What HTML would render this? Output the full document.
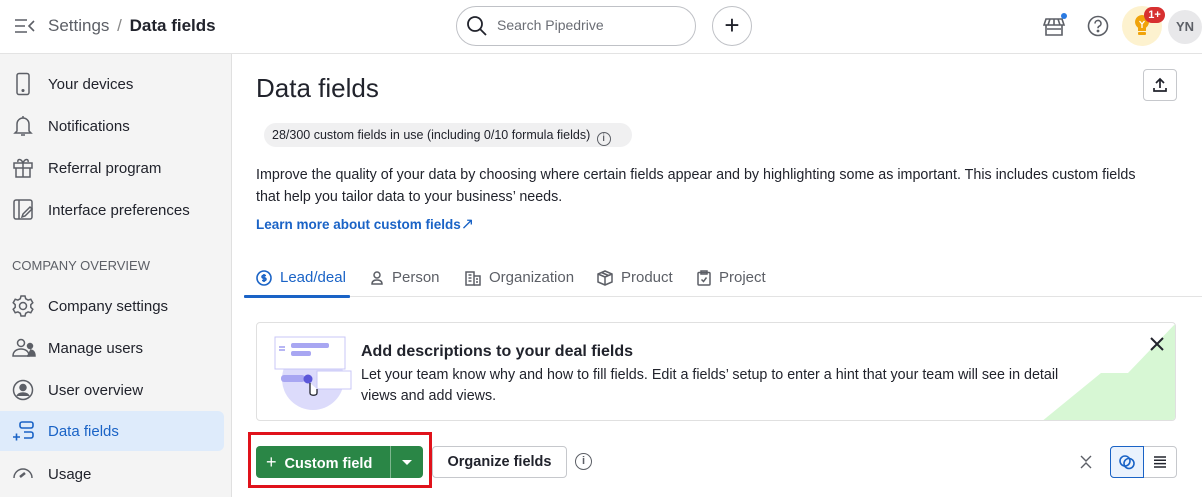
<!DOCTYPE html>
<html><head><meta charset="utf-8"><style>
*{box-sizing:border-box;margin:0;padding:0}
body{width:1202px;height:497px;overflow:hidden;font-family:"Liberation Sans",sans-serif;color:#21232c;background:#fff;position:relative}
.abs{position:absolute}
.hdr{left:0;top:0;width:1202px;height:54px;border-bottom:1px solid #e3e3e3;background:#fff}
.side{left:0;top:54px;width:232px;height:443px;background:#f4f4f4;border-right:1px solid #e0e0e0}
.item{position:absolute;left:0;width:224px;height:40px;display:flex;align-items:center;font-size:15px;color:#21232c}
.item svg{position:absolute;left:12px}
.item span{position:absolute;left:48px}
.sel{background:#deebfb;color:#1a63c6;border-radius:0 6px 6px 0}
.tab{position:absolute;top:269px;font-size:15px;color:#5c5f66;display:flex;align-items:center;gap:8px}
</style></head><body>
<div class="abs hdr">
<svg class="abs" style="left:14px;top:18px" width="22" height="16" viewBox="0 0 22 16" fill="none" stroke="#5c5f66" stroke-width="1.6"><path d="M1 2h12M1 8h10M1 14h12M20 3l-5 5 5 5"/></svg>
<div class="abs" style="left:48px;top:16px;font-size:17px;color:#5c5f66">Settings <span style="color:#888;margin:0 3px">/</span> <b style="color:#21232c">Data fields</b></div>
<div class="abs" style="left:456px;top:6px;width:240px;height:40px;border:1px solid #bfc1c6;border-radius:20px"></div>
<svg class="abs" style="left:466px;top:15px" width="22" height="22" viewBox="0 0 22 22" fill="none" stroke="#21232c" stroke-width="1.8"><circle cx="9" cy="9" r="7"/><path d="M14 14l6 6"/></svg>
<div class="abs" style="left:497px;top:17px;font-size:14px;color:#6a6d74">Search Pipedrive</div>
<div class="abs" style="left:712px;top:6px;width:40px;height:40px;border:1px solid #bfc1c6;border-radius:20px;text-align:center;line-height:36px;font-size:26px;color:#21232c">+</div>
<svg class="abs" style="left:1043px;top:15px" width="24" height="22" viewBox="0 0 24 22" fill="none" stroke="#5c5f66" stroke-width="1.6"><path d="M3 4h16l2 6H1zM3 10v10h16V10M7 4L5 10M11 4v6M15 4l2 6M4 14h14"/></svg>
<div class="abs" style="left:1061px;top:13px;width:6px;height:6px;border-radius:3px;background:#2a7ae2"></div>
<svg class="abs" style="left:1087px;top:15px" width="22" height="22" viewBox="0 0 22 22" fill="none" stroke="#5c5f66" stroke-width="1.6"><circle cx="11" cy="11" r="9.5"/><path d="M8 8.5a3 3 0 1 1 4 2.8c-.8.4-1 1-1 2"/><circle cx="11" cy="16" r=".6" fill="#5c5f66"/></svg>
<div class="abs" style="left:1122px;top:6px;width:40px;height:40px;border-radius:20px;background:#fdf2cf"></div>
<svg class="abs" style="left:1133px;top:14px" width="18" height="24" viewBox="0 0 18 24"><path d="M9 1a7 7 0 0 0-4 12.7V17h8v-3.3A7 7 0 0 0 9 1z" fill="#f0a30a"/><rect x="5" y="18" width="8" height="3" rx="1" fill="#f0a30a"/><path d="M6.5 7l2.5 3 2.5-3M9 10v4" stroke="#fff" stroke-width="1.3" fill="none"/></svg>
<div class="abs" style="left:1144px;top:7px;width:21px;height:16px;border-radius:8px;background:#d73030;color:#fff;font-size:11px;font-weight:bold;text-align:center;line-height:16px">1+</div>
<div class="abs" style="left:1168px;top:10px;width:34px;height:34px;border-radius:17px;background:#e8e8ea;color:#5c5f66;font-size:13px;font-weight:bold;text-align:center;line-height:34px">YN</div>
</div>
<div class="abs side">
<div class="item" style="top:10px"><svg width="22" height="24" viewBox="0 0 22 24" fill="none" stroke="#5c5f66" stroke-width="1.5"><rect x="5" y="1.5" width="12" height="21" rx="2"/><circle cx="11" cy="18.5" r=".8" fill="#5c5f66"/></svg><span>Your devices</span></div>
<div class="item" style="top:52px"><svg width="22" height="24" viewBox="0 0 22 24" fill="none" stroke="#5c5f66" stroke-width="1.5"><path d="M5 17V10a6 6 0 0 1 12 0v7l2 2H3zM9 21h4M11 2v2"/></svg><span>Notifications</span></div>
<div class="item" style="top:94px"><svg width="22" height="24" viewBox="0 0 22 24" fill="none" stroke="#5c5f66" stroke-width="1.5"><rect x="2" y="7" width="18" height="5"/><path d="M4 12v9h14v-9M11 7v14M11 7c-2-5-6-4-5-1M11 7c2-5 6-4 5-1"/></svg><span>Referral program</span></div>
<div class="item" style="top:136px"><svg width="22" height="24" viewBox="0 0 22 24" fill="none" stroke="#5c5f66" stroke-width="1.5"><rect x="2" y="2" width="18" height="19" rx="2"/><path d="M7 2v19M10 19l1-3 7-7 2 2-7 7z"/></svg><span>Interface preferences</span></div>
<div class="abs" style="left:12px;top:204px;font-size:13px;color:#5c5f66">COMPANY OVERVIEW</div>
<div class="item" style="top:232px"><svg width="22" height="24" viewBox="0 0 22 24" fill="none" stroke="#5c5f66" stroke-width="1.5"><circle cx="11" cy="12" r="3.5"/><path d="M9 2h4l.7 2.7 2.4 1.4 2.7-.8 2 3.4-2 2v2.6l2 2-2 3.4-2.7-.8-2.4 1.4L13 22H9l-.7-2.7-2.4-1.4-2.7.8-2-3.4 2-2v-2.6l-2-2 2-3.4 2.7.8 2.4-1.4z"/></svg><span>Company settings</span></div>
<div class="item" style="top:274px"><svg width="24" height="24" viewBox="0 0 24 24" fill="none" stroke="#5c5f66" stroke-width="1.5"><circle cx="9" cy="7" r="3.5"/><path d="M1 20c0-5 4-7 8-7s8 2 8 7z"/><circle cx="18" cy="10" r="2.5" fill="#5c5f66"/><path d="M15 20h8c0-4-2-6-5-6" fill="#5c5f66"/></svg><span>Manage users</span></div>
<div class="item" style="top:316px"><svg width="22" height="24" viewBox="0 0 22 24" fill="none" stroke="#5c5f66" stroke-width="1.5"><circle cx="11" cy="12" r="9.5"/><circle cx="11" cy="9.5" r="3" fill="#5c5f66"/><path d="M5 18c2-4 10-4 12 0" fill="#5c5f66"/></svg><span>User overview</span></div>
<div class="item sel" style="top:357px"><svg width="24" height="24" viewBox="0 0 24 24" fill="none" stroke="#1a63c6" stroke-width="1.6"><rect x="8" y="3" width="13" height="6" rx="2"/><path d="M12 13h7a2 2 0 0 1 2 2v2a2 2 0 0 1-2 2h-7M1 18h7M4.5 14.5v7"/></svg><span style="font-weight:500">Data fields</span></div>
<div class="item" style="top:400px"><svg width="22" height="24" viewBox="0 0 22 24" fill="none" stroke="#5c5f66" stroke-width="1.5"><path d="M2 16a9 9 0 0 1 18 0"/><path d="M8 15l5-4" stroke-width="2.5"/></svg><span>Usage</span></div>
</div>
<div class="abs" style="left:256px;top:73px;font-size:26px">Data fields</div>
<div class="abs" style="left:1143px;top:69px;width:34px;height:32px;border:1px solid #c6c8cc;border-radius:4px"></div>
<svg class="abs" style="left:1151px;top:76px" width="18" height="18" viewBox="0 0 18 18" fill="none" stroke="#21232c" stroke-width="1.7"><path d="M9 12V3M5 7l4-4 4 4M3 12v3h12v-3"/></svg>
<div class="abs" style="left:264px;top:123px;width:368px;height:24px;border-radius:12px;background:#f0f0f1;font-size:12.5px;line-height:24px;padding-left:8px;color:#21232c">28/300 custom fields in use (including 0/10 formula fields) <span style="display:inline-block;width:14px;height:14px;border:1.3px solid #5c5f66;border-radius:7px;font-size:10px;line-height:12px;text-align:center;vertical-align:-2px;margin-left:3px">i</span></div>
<div class="abs" style="left:256px;top:164px;width:895px;font-size:14.3px;line-height:22px">Improve the quality of your data by choosing where certain fields appear and by highlighting some as important. This includes custom fields that help you tailor data to your business’ needs.</div>
<div class="abs" style="left:256px;top:214px;font-size:13.5px;color:#1a63c6;font-weight:bold">Learn more about custom fields<span style="font-weight:normal;font-size:16px">↗</span></div>
<div class="tab" style="left:256px;color:#1a63c6"><svg width="16" height="16" viewBox="0 0 16 16" fill="none" stroke="#1a63c6" stroke-width="1.6"><circle cx="8" cy="8" r="7"/><path d="M10 5.5H7a1.3 1.3 0 0 0 0 2.5h2a1.3 1.3 0 0 1 0 2.5H6M8 4v8"/></svg>Lead/deal</div>
<div class="tab" style="left:370px"><svg width="14" height="16" viewBox="0 0 14 16" fill="none" stroke="#5c5f66" stroke-width="1.5"><circle cx="7" cy="5" r="3"/><path d="M2 14c0-3 2-4 5-4s5 1 5 4z"/></svg>Person</div>
<div class="tab" style="left:465px"><svg width="16" height="16" viewBox="0 0 16 16" fill="none" stroke="#5c5f66" stroke-width="1.5"><rect x="1" y="2" width="8" height="13"/><path d="M9 6h6v9H9M3.5 5h3M3.5 8h3M3.5 11h3M11 9h2M11 12h2"/></svg>Organization</div>
<div class="tab" style="left:597px"><svg width="16" height="16" viewBox="0 0 16 16" fill="none" stroke="#5c5f66" stroke-width="1.5"><path d="M8 1l7 3v8l-7 3-7-3V4zM1 4l7 3 7-3M8 7v8M4.5 2.5l7 3"/></svg>Product</div>
<div class="tab" style="left:697px"><svg width="14" height="16" viewBox="0 0 14 16" fill="none" stroke="#5c5f66" stroke-width="1.5"><rect x="1" y="2.5" width="12" height="12.5" rx="1"/><rect x="4" y="1" width="6" height="3"/><path d="M4.5 9.5l2 2 3-4"/></svg>Project</div>
<div class="abs" style="left:244px;top:296px;width:958px;height:1px;background:#e3e3e3"></div>
<div class="abs" style="left:244px;top:295px;width:106px;height:3px;background:#1a63c6;border-radius:1px"></div>
<div class="abs" style="left:256px;top:322px;width:920px;height:99px;border:1px solid #e0e0e0;border-radius:4px;overflow:hidden">
<svg class="abs" style="left:0;top:0" width="920" height="99"><path d="M784 99L844 50H871L919 0V99z" fill="#d7f7d4"/></svg>
<svg class="abs" style="left:16px;top:6px" width="80" height="90" viewBox="0 0 80 90"><circle cx="40" cy="50" r="31" fill="#dcdbfb"/><rect x="2" y="8" width="70" height="32" fill="#fff" stroke="#c9c7f7"/><rect x="18" y="14" width="38" height="5" rx="2" fill="#a8a6f2"/><rect x="18" y="22" width="20" height="5" rx="2" fill="#a8a6f2"/><path d="M6 18h6M6 21h6" stroke="#6f6ce8"/><rect x="8" y="46" width="24" height="7" rx="3" fill="#a8a6f2"/><rect x="44" y="42" width="34" height="18" fill="#fff" stroke="#c9c7f7"/><circle cx="35" cy="50" r="4.5" fill="#5b57d9"/><path d="M37 54v10c0 3 7 3 7 0v-4" stroke="#21232c" fill="#fff" stroke-width="1.3"/></svg>
<div class="abs" style="left:104px;top:20px;font-size:16px;font-weight:bold">Add descriptions to your deal fields</div>
<div class="abs" style="left:104px;top:42px;width:725px;font-size:14.3px;line-height:21px">Let your team know why and how to fill fields. Edit a fields’ setup to enter a hint that your team will see in detail views and add views.</div>
<svg class="abs" style="left:893px;top:14px" width="14" height="14" viewBox="0 0 14 14" stroke="#21232c" stroke-width="2"><path d="M1 1l12 12M13 1L1 13"/></svg>
</div>
<div class="abs" style="left:248px;top:432px;width:184px;height:56px;border:3px solid #e0121b"></div>
<div class="abs" style="left:256px;top:446px;width:167px;height:32px;background:#2a8646;border-radius:4px;color:#fff;font-size:14.5px;font-weight:bold;line-height:32px;padding-left:10px"><span style="font-weight:normal;font-size:18px;margin-right:8px">+</span>Custom field</div>
<div class="abs" style="left:390px;top:446px;width:1px;height:32px;background:#7db68e"></div>
<svg class="abs" style="left:401px;top:459px" width="12" height="7"><path d="M1 1h10L6 6z" fill="#fff"/></svg>
<div class="abs" style="left:432px;top:446px;width:135px;height:32px;border:1px solid #c6c8cc;border-radius:4px;font-size:14.5px;font-weight:bold;text-align:center;line-height:30px">Organize fields</div>
<div class="abs" style="left:575px;top:453px;width:17px;height:17px;border:1.5px solid #5c5f66;border-radius:9px;font-size:11px;text-align:center;line-height:14px;color:#5c5f66;font-weight:bold">i</div>
<svg class="abs" style="left:1079px;top:455px" width="14" height="14" viewBox="0 0 14 14" fill="none" stroke="#5c5f66" stroke-width="1.4"><path d="M2 1l5 5 5-5M2 13l5-5 5 5"/></svg>
<div class="abs" style="left:1110px;top:446px;width:67px;height:32px;border:1px solid #c6c8cc;border-radius:4px"></div>
<div class="abs" style="left:1110px;top:446px;width:34px;height:32px;border:1px solid #1a63c6;background:#eaf2fd;border-radius:4px 0 0 4px"></div>
<svg class="abs" style="left:1118px;top:453px" width="18" height="18" viewBox="0 0 18 18" fill="none" stroke="#1a63c6" stroke-width="1.6"><circle cx="7" cy="8" r="5"/><circle cx="11" cy="10.5" r="5"/></svg>
<svg class="abs" style="left:1153px;top:455px" width="14" height="14" viewBox="0 0 14 14" stroke="#21232c" stroke-width="1.5"><path d="M1 2h12M1 5.3h12M1 8.6h12M1 12h12"/></svg>
</body></html>
